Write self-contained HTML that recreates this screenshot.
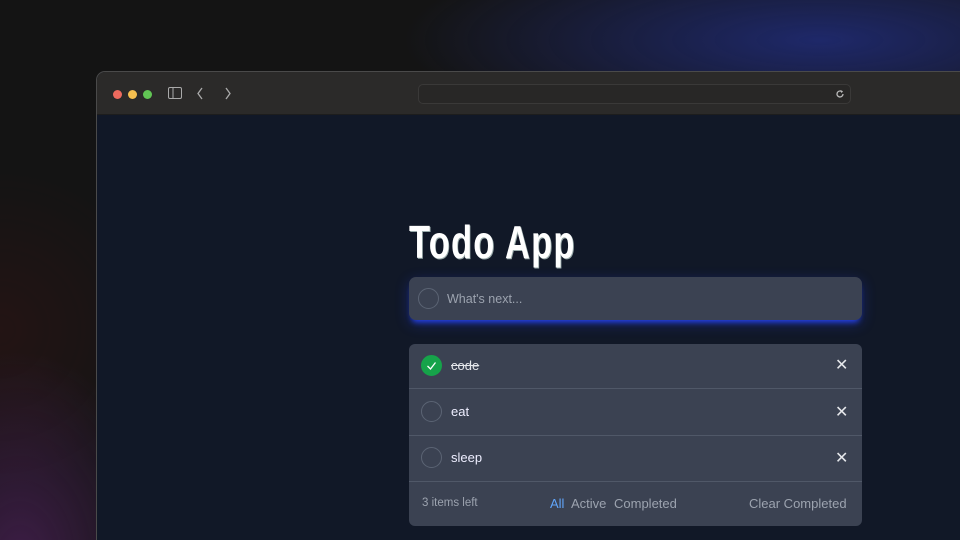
<!DOCTYPE html>
<html><head><style>
*{margin:0;padding:0;box-sizing:border-box}
html,body{width:960px;height:540px;overflow:hidden}
body{position:relative;font-family:"Liberation Sans",sans-serif;
background:radial-gradient(ellipse 520px 130px at 820px 40px,rgba(40,60,190,.5),transparent 80%),radial-gradient(ellipse 180px 260px at 20px 560px,rgba(110,40,130,.45),transparent 80%),radial-gradient(ellipse 200px 200px at 0px 330px,rgba(80,20,20,.25),transparent 80%),#141414;}
.win{position:absolute;left:96px;top:71px;width:880px;height:480px;border-radius:9px;border:1px solid #4a4a4a;overflow:hidden;background:#111827}
.bar{height:43px;background:#2b2a29;border-bottom:1px solid #1d1d1d;position:relative}
.dot{position:absolute;top:18px;width:9px;height:9px;border-radius:50%}
.url{position:absolute;left:321px;top:12px;width:433px;height:20px;border:1px solid #3a3938;border-radius:5px;background:#282726}
.title{position:absolute;left:312px;top:144px;font-weight:bold;font-size:42px;color:#fff;letter-spacing:1.5px;transform:scale(0.82,1.1);transform-origin:top left;text-shadow:1px 1px 0 #9aa}
.input{position:absolute;left:312px;top:205px;width:453px;height:43px;background:#3b4252;border-radius:7px;box-shadow:0 5px 6px -3px rgba(40,70,255,.9),0 4px 14px rgba(40,70,255,.3)}
.circ{position:absolute;width:21px;height:21px;border-radius:50%;border:1px solid #5b6474}
.list{position:absolute;left:312px;top:272px;width:453px;height:182px;background:#3b4252;border-radius:6px;overflow:hidden}
.row{position:absolute;left:0;width:453px;border-bottom:1px solid #505868}
.row span{position:absolute;left:42px;color:#eef;font-size:13px}
.x{position:absolute;left:426px;color:#e5e7eb;font-size:16px}
.ft{position:absolute;top:152px;font-size:13px;color:#9ca3af}
</style></head><body>
<div class="win">
<div class="bar">
<div class="dot" style="left:16px;background:#ed6a5e"></div>
<div class="dot" style="left:31px;background:#f5bf4f"></div>
<div class="dot" style="left:46px;background:#61c554"></div>
<svg style="position:absolute;left:71px;top:15px" width="14" height="13" viewBox="0 0 14 13"><rect x=".5" y=".5" width="13" height="11" rx="1.5" fill="none" stroke="#aaa"/><line x1="5" y1="1" x2="5" y2="11" stroke="#aaa"/></svg>
<svg style="position:absolute;left:99px;top:15px" width="8" height="13"><path d="M6 1L2 6.5 6 12" fill="none" stroke="#aaa" stroke-width="1.3"/></svg>
<svg style="position:absolute;left:127px;top:15px" width="8" height="13"><path d="M2 1L6 6.5 2 12" fill="none" stroke="#aaa" stroke-width="1.3"/></svg>
<div class="url"><svg style="position:absolute;right:5px;top:4px" width="10" height="10" viewBox="0 0 10 10"><path d="M8 5A3 3 0 1 1 6.5 2.4" fill="none" stroke="#bbb" stroke-width="1.3"/><path d="M5.5 1L8 2.3 6.5 4.3z" fill="#bbb"/></svg></div>
</div>
<div class="title">Todo App</div>
<div class="input"><div class="circ" style="left:9px;top:11px"></div><span style="position:absolute;left:38px;top:15px;color:#9ca3af;font-size:12.5px">What's next...</span></div>
<div class="list">
<div class="row" style="top:0;height:45px"><div class="circ" style="left:12px;top:11px;background:#16a34a;border-color:#16a34a"><svg width="19" height="19" style="position:absolute;left:0;top:0"><path d="M5.5 10L8.5 13 13.5 6.5" fill="none" stroke="#fff" stroke-width="1.3"/></svg></div><span style="top:14px;text-decoration:line-through;color:#e5e7eb">code</span><div class="x" style="top:11px">✕</div></div>
<div class="row" style="top:45px;height:47px"><div class="circ" style="left:12px;top:12px"></div><span style="top:15px">eat</span><div class="x" style="top:13px">✕</div></div>
<div class="row" style="top:92px;height:46px"><div class="circ" style="left:12px;top:11px"></div><span style="top:14px">sleep</span><div class="x" style="top:12px">✕</div></div>
<div class="ft" style="left:13px;font-size:11.5px;top:153px">3 items left</div>
<div class="ft" style="left:141px;color:#60a5fa">All</div>
<div class="ft" style="left:162px">Active</div>
<div class="ft" style="left:205px">Completed</div>
<div class="ft" style="left:340px">Clear Completed</div>
</div>
</div>
</body></html>
